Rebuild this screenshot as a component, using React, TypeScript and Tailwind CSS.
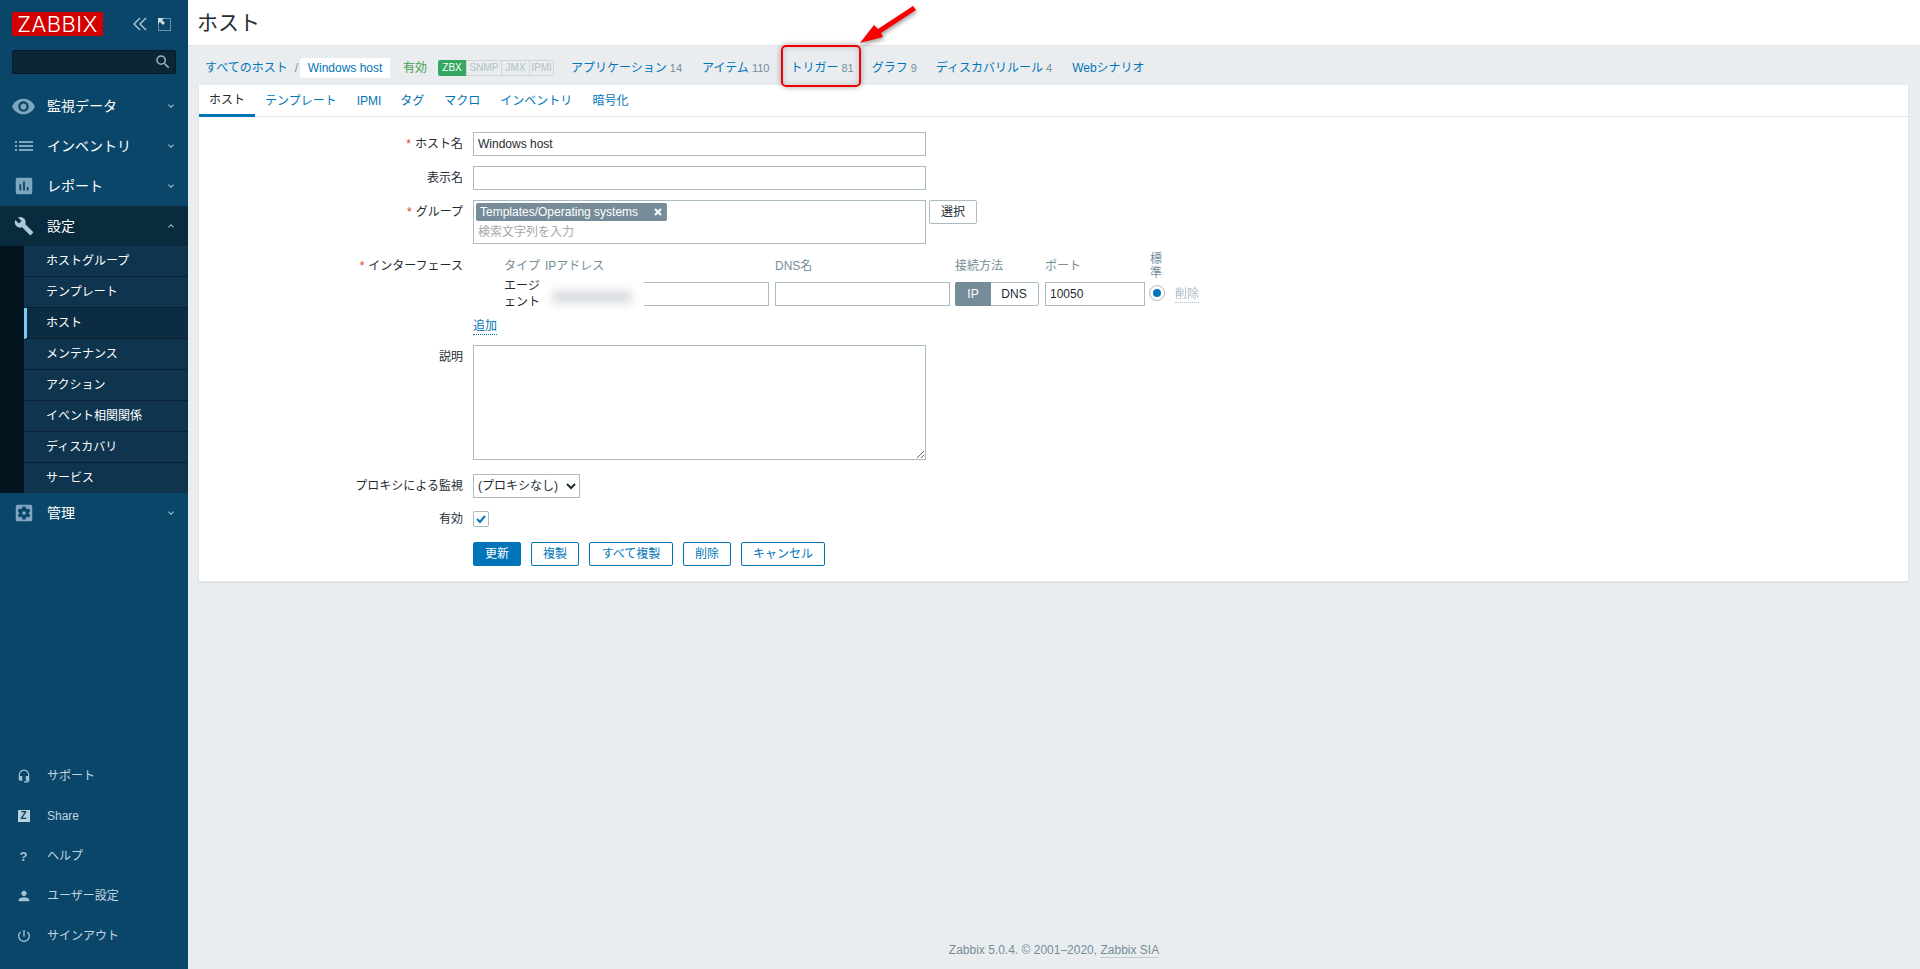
import React from "react";
import {
  MdVisibility,
  MdList,
  MdAssessment,
  MdBuild,
  MdSettingsApplications,
  MdHeadsetMic,
  MdPerson,
  MdPowerSettingsNew,
  MdSearch,
  MdKeyboardArrowDown,
  MdKeyboardArrowUp,
} from "react-icons/md";

const NavItem = ({ icon, label, open }: { icon: React.ReactNode; label: string; open?: boolean }) => (
  <div className={`flex h-10 items-center ${open ? "bg-[#0a2a3e]" : ""}`}>
    <div className="flex w-[47px] justify-center text-[#7ea6c0]">{icon}</div>
    <span className="flex-1 text-[14px] text-white">{label}</span>
    <span className="mr-[11px] text-[#a3bfd0]">
      {open ? <MdKeyboardArrowUp size={12} /> : <MdKeyboardArrowDown size={12} />}
    </span>
  </div>
);

const SubItem = ({ label, active, last }: { label: string; active?: boolean; last?: boolean }) => (
  <div
    className={`flex items-center text-[12px] text-white ${active ? "border-l-[3px] border-l-[#7ccbf5] bg-[#0b2c42] pl-[19px]" : "bg-[#0e344e] pl-[22px]"} ${last ? "h-[30px]" : "h-[31px] border-b border-b-[#08202f]"}`}
  >
    {label}
  </div>
);

const BottomItem = ({ icon, label }: { icon: React.ReactNode; label: string }) => (
  <div className="flex h-10 items-center">
    <div className="flex w-[47px] justify-center text-[#a6c3d4]">{icon}</div>
    <span className="text-[12px] text-[#c3d5e0]">{label}</span>
  </div>
);

const Count = ({ n }: { n: string }) => <span className="ml-[3px] text-[11px] text-[#768d99]">{n}</span>;

const Row = ({
  label,
  required,
  children,
  className = "",
  labelClass = "",
}: {
  label?: string;
  required?: boolean;
  children: React.ReactNode;
  className?: string;
  labelClass?: string;
}) => (
  <div className={`flex ${className}`}>
    <div className={`flex h-6 w-[264px] items-center justify-end text-[12px] text-[#1f2c33] ${labelClass}`}>
      {required && <span className="mr-[4px] text-[#e33734]">*</span>}
      {label}
    </div>
    <div className="ml-[10px] min-w-0 flex-1">{children}</div>
  </div>
);

const inputCls =
  "block h-6 border border-[#acbbc2] bg-white px-[4px] text-[12px] text-[#1f2c33] outline-none";

const Btn = ({ label, w, primary }: { label: string; w: string; primary?: boolean }) => (
  <div
    className={`flex h-6 items-center justify-center rounded-[2px] border border-[#0275b8] text-[12px] ${w} ${primary ? "bg-[#0275b8] text-white" : "bg-white text-[#0275b8]"}`}
  >
    {label}
  </div>
);

export default function App() {
  return (
    <div className="flex h-[969px] overflow-hidden bg-[#e9edf0] font-['Liberation_Sans','Noto_Sans_CJK_JP',sans-serif]">
      {/* Sidebar */}
      <aside className="flex w-[188px] shrink-0 flex-col bg-[#0a466a]">
        <div className="mt-[12px] flex h-6 items-center pl-3">
          <div className="flex h-6 w-[91px] items-center justify-center bg-[#d40000] font-['Inter',sans-serif] text-[22px] font-light leading-none tracking-[0.5px] text-white">
            ZABBIX
          </div>
          <svg className="ml-[30px]" width="14" height="14" viewBox="0 0 14 14" fill="none" stroke="#a9c3d3" strokeWidth="1.5">
            <path d="M7 1 1 7l6 6M13 1 7 7l6 6" />
          </svg>
          <svg className="ml-[11px]" width="13" height="13" viewBox="0 0 13 13" fill="none">
            <rect x="0.5" y="0.5" width="12" height="12" stroke="#cfdde6" strokeWidth="1" strokeDasharray="1 1" />
            <path d="M0 0h6L4 2l3 3-2 2-3-3-2 2z" fill="#cfdde6" />
          </svg>
        </div>
        <div className="relative mx-3 mt-[14px] h-6 rounded-[2px] border border-[#071a27] bg-[#0a2637]">
          <MdSearch size={18} className="absolute right-[3px] top-[2px] text-[#9fb4c1]" />
        </div>
        <nav className="mt-3">
          <NavItem icon={<MdVisibility size={25} />} label="監視データ" />
          <NavItem icon={<MdList size={24} />} label="インベントリ" />
          <NavItem icon={<MdAssessment size={22} />} label="レポート" />
          <NavItem icon={<MdBuild size={20} className="text-[#a9c8da]" />} label="設定" open />
          <div className="flex bg-[#04141e]">
            <div className="w-6 shrink-0" />
            <div className="flex-1">
              <SubItem label="ホストグループ" />
              <SubItem label="テンプレート" />
              <SubItem label="ホスト" active />
              <SubItem label="メンテナンス" />
              <SubItem label="アクション" />
              <SubItem label="イベント相関関係" />
              <SubItem label="ディスカバリ" />
              <SubItem label="サービス" last />
            </div>
          </div>
          <NavItem icon={<MdSettingsApplications size={22} />} label="管理" />
        </nav>
        <div className="mt-auto pb-[13px]">
          <BottomItem icon={<MdHeadsetMic size={14} />} label="サポート" />
          <BottomItem
            icon={
              <span className="flex h-3 w-3 items-center justify-center bg-[#b9d0dd] text-[10px] font-bold leading-none text-[#0a466a]">
                Z
              </span>
            }
            label="Share"
          />
          <BottomItem icon={<span className="text-[13px] font-bold leading-none">?</span>} label="ヘルプ" />
          <BottomItem icon={<MdPerson size={16} />} label="ユーザー設定" />
          <BottomItem icon={<MdPowerSettingsNew size={16} />} label="サインアウト" />
        </div>
      </aside>

      {/* Main */}
      <main className="relative flex min-w-0 flex-1 flex-col">
        <header className="flex h-[46px] shrink-0 items-center border-b border-[#dfe4e7] bg-white pl-[9px] text-[21px] text-[#1f2c33]">
          ホスト
        </header>

        {/* Host nav */}
        <div className="flex h-[39px] shrink-0 items-center pl-[17px] pt-[5px] text-[12px] text-[#0275b8]">
          <span>すべてのホスト</span>
          <span className="ml-[7px] text-[#768d99]">/</span>
          <span className="ml-[2px] flex h-5 w-[90px] items-center justify-center rounded-[2px] bg-white">Windows host</span>
          <span className="ml-[13px] text-[#429e47]">有効</span>
          <div className="ml-[11px] flex h-4 overflow-hidden rounded-[2px] text-[10px] leading-none text-[#b3bfc5]">
            <span className="flex w-[28px] items-center justify-center bg-[#34a860] text-white">ZBX</span>
            <span className="flex w-[35px] items-center justify-center border-y border-l border-[#ced6da]">SNMP</span>
            <span className="flex w-[28px] items-center justify-center border-y border-l border-[#ced6da]">JMX</span>
            <span className="flex w-[25px] items-center justify-center border border-[#ced6da]">IPMI</span>
          </div>
          <span className="ml-[17px]">アプリケーション</span>
          <Count n="14" />
          <span className="ml-[20px]">アイテム</span>
          <Count n="110" />
          <span className="relative ml-[21px]">
            トリガー
            <span className="absolute left-[-9px] top-[-14px] h-[42px] w-[80px] rounded-[5px] border-2 border-[#f00000] shadow-[0_0_6px_rgba(0,0,0,0.35),inset_0_0_6px_rgba(0,0,0,0.2)]" />
          </span>
          <Count n="81" />
          <span className="ml-[18px]">グラフ</span>
          <Count n="9" />
          <span className="ml-[19px]">ディスカバリルール</span>
          <Count n="4" />
          <span className="ml-[20px]">Webシナリオ</span>
        </div>

        {/* Red annotation arrow */}
        <svg className="absolute left-[660px] top-0 z-10 drop-shadow-[1px_2px_2px_rgba(0,0,0,0.4)]" width="80" height="50" viewBox="660 0 80 50">
          <path d="M672 43 686 25 690 29 725 6 728 10 693 33 695 37Z" fill="#f60000" />
        </svg>

        {/* Card */}
        <section className="ml-[10px] mr-[11px] border-x border-b-2 border-[#e1e5e8] bg-white pb-[15px]">
          <div className="flex h-[32px] border-b-[1px] border-[#e6e9ec] text-[12px] text-[#0275b8]">
            <span className="flex h-[32px] items-center border-b-[3px] border-[#0275b8] px-[10px] text-[#1f2c33]">ホスト</span>
            <span className="flex h-[32px] items-center px-[10px]">テンプレート</span>
            <span className="flex h-[32px] items-center px-[10px]">IPMI</span>
            <span className="-ml-[1px] flex h-[32px] items-center px-[10px]">タグ</span>
            <span className="flex h-[32px] items-center px-[10px]">マクロ</span>
            <span className="flex h-[32px] items-center px-[10px]">インベントリ</span>
            <span className="flex h-[32px] items-center px-[10px]">暗号化</span>
          </div>

          <div className="flex flex-col gap-[10px] pt-[15px]">
            <Row label="ホスト名" required>
              <input readOnly value="Windows host" className={`${inputCls} w-[453px]`} />
            </Row>
            <Row label="表示名">
              <input readOnly value="" className={`${inputCls} w-[453px]`} />
            </Row>
            <Row label="グループ" required>
              <div className="flex items-start">
                <div className="h-[44px] w-[453px] border border-[#acbbc2] pl-[2px] pt-[2px]">
                  <div className="flex h-[18px] w-[191px] items-center rounded-[2px] bg-[#768d99] pl-[4px] text-[12px] text-white">
                    <span className="flex-1 whitespace-nowrap">Templates/Operating systems</span>
                    <svg className="mr-[5px]" width="8" height="8" viewBox="0 0 8 8" fill="none" stroke="white" strokeWidth="2">
                      <path d="M1 1l6 6M7 1 1 7" />
                    </svg>
                  </div>
                  <div className="mt-[2px] pl-[2px] text-[12px] leading-[18px] text-[#a7a7a7]">検索文字列を入力</div>
                </div>
                <div className="ml-[3px] flex h-6 w-[48px] items-center justify-center rounded-[2px] border border-[#acbbc2] text-[12px] text-[#1f2c33]">
                  選択
                </div>
              </div>
            </Row>

            <Row label="インターフェース" required className="-mt-[2px]" labelClass="mt-[2px]">
              <div className="text-[12px] text-[#768d99]">
                <div className="flex h-[28px] items-center">
                  <span className="ml-[31px] w-[41px]">タイプ</span>
                  <span className="w-[230px]">IPアドレス</span>
                  <span className="w-[180px]">DNS名</span>
                  <span className="w-[90px]">接続方法</span>
                  <span className="w-[105px]">ポート</span>
                  <span className="w-[12px] leading-[14px]">標準</span>
                </div>
                <div className="mt-[2px] flex h-[28px] items-start">
                  <span className="-mt-[4px] ml-[31px] w-[37px] text-[12px] leading-[16px] text-[#1f2c33]">エージェント</span>
                  <div className="relative h-6 w-[228px] border border-[#acbbc2] bg-white">
                    <div className="absolute left-[-2px] top-[-1px] h-[29px] w-[104px] overflow-hidden bg-white">
                      <div className="ml-[12px] mt-[8px] h-[14px] w-[80px] bg-[#dcdfe2] blur-[4px]" />
                    </div>
                  </div>
                  <input readOnly value="" className={`${inputCls} ml-[6px] w-[175px]`} />
                  <div className="ml-[5px] flex h-6 w-[84px] rounded-[2px] border border-[#acbbc2] text-[12px]">
                    <span className="-m-[1px] flex w-[36px] items-center justify-center rounded-l-[2px] bg-[#768d99] text-white">IP</span>
                    <span className="flex flex-1 items-center justify-center text-[#1f2c33]">DNS</span>
                  </div>
                  <input readOnly value="10050" className={`${inputCls} ml-[6px] w-[100px]`} />
                  <div className="ml-[4px] mt-[3px] flex h-4 w-4 items-center justify-center rounded-full border border-[#acbbc2]">
                    <span className="h-2 w-2 rounded-full bg-[#0275b8]" />
                  </div>
                  <span className="ml-[10px] mt-[5px] border-b border-dotted border-[#acbbc2] pb-[1px] leading-[14px] text-[#acbbc2]">削除</span>
                </div>
                <div className="mt-[7px]">
                  <span className="inline-block border-b border-dotted border-[#0275b8] text-[12px] leading-[16px] text-[#0275b8]">追加</span>
                </div>
              </div>
            </Row>

            <Row label="説明">
              <textarea readOnly value="" className="block h-[115px] w-[453px] border border-[#acbbc2] bg-white outline-none" />
            </Row>
            <Row label="プロキシによる監視" className="mt-[4px]">
              <select className="block h-6 w-[107px] border border-[#acbbc2] bg-white text-[12px] text-[#1f2c33]">
                <option>(プロキシなし)</option>
              </select>
            </Row>
            <Row label="有効" className="-mt-[1px]">
              <div className="mt-[4px] flex h-4 w-4 items-center justify-center rounded-[2px] border border-[#acbbc2]">
                <svg width="12" height="12" viewBox="0 0 12 12" fill="none" stroke="#0275b8" strokeWidth="2">
                  <path d="M2 6l3 3 5-6" />
                </svg>
              </div>
            </Row>
            <div className="mt-[1px] flex gap-[10px] pl-[274px]">
              <Btn label="更新" w="w-[48px]" primary />
              <Btn label="複製" w="w-[48px]" />
              <Btn label="すべて複製" w="w-[84px]" />
              <Btn label="削除" w="w-[48px]" />
              <Btn label="キャンセル" w="w-[84px]" />
            </div>
          </div>
        </section>

        <footer className="mt-auto pb-[10px] text-center text-[12px] text-[#768d99]">
          Zabbix 5.0.4. © 2001–2020, <span className="border-b border-[#c3ccd2]">Zabbix SIA</span>
        </footer>
      </main>
    </div>
  );
}
